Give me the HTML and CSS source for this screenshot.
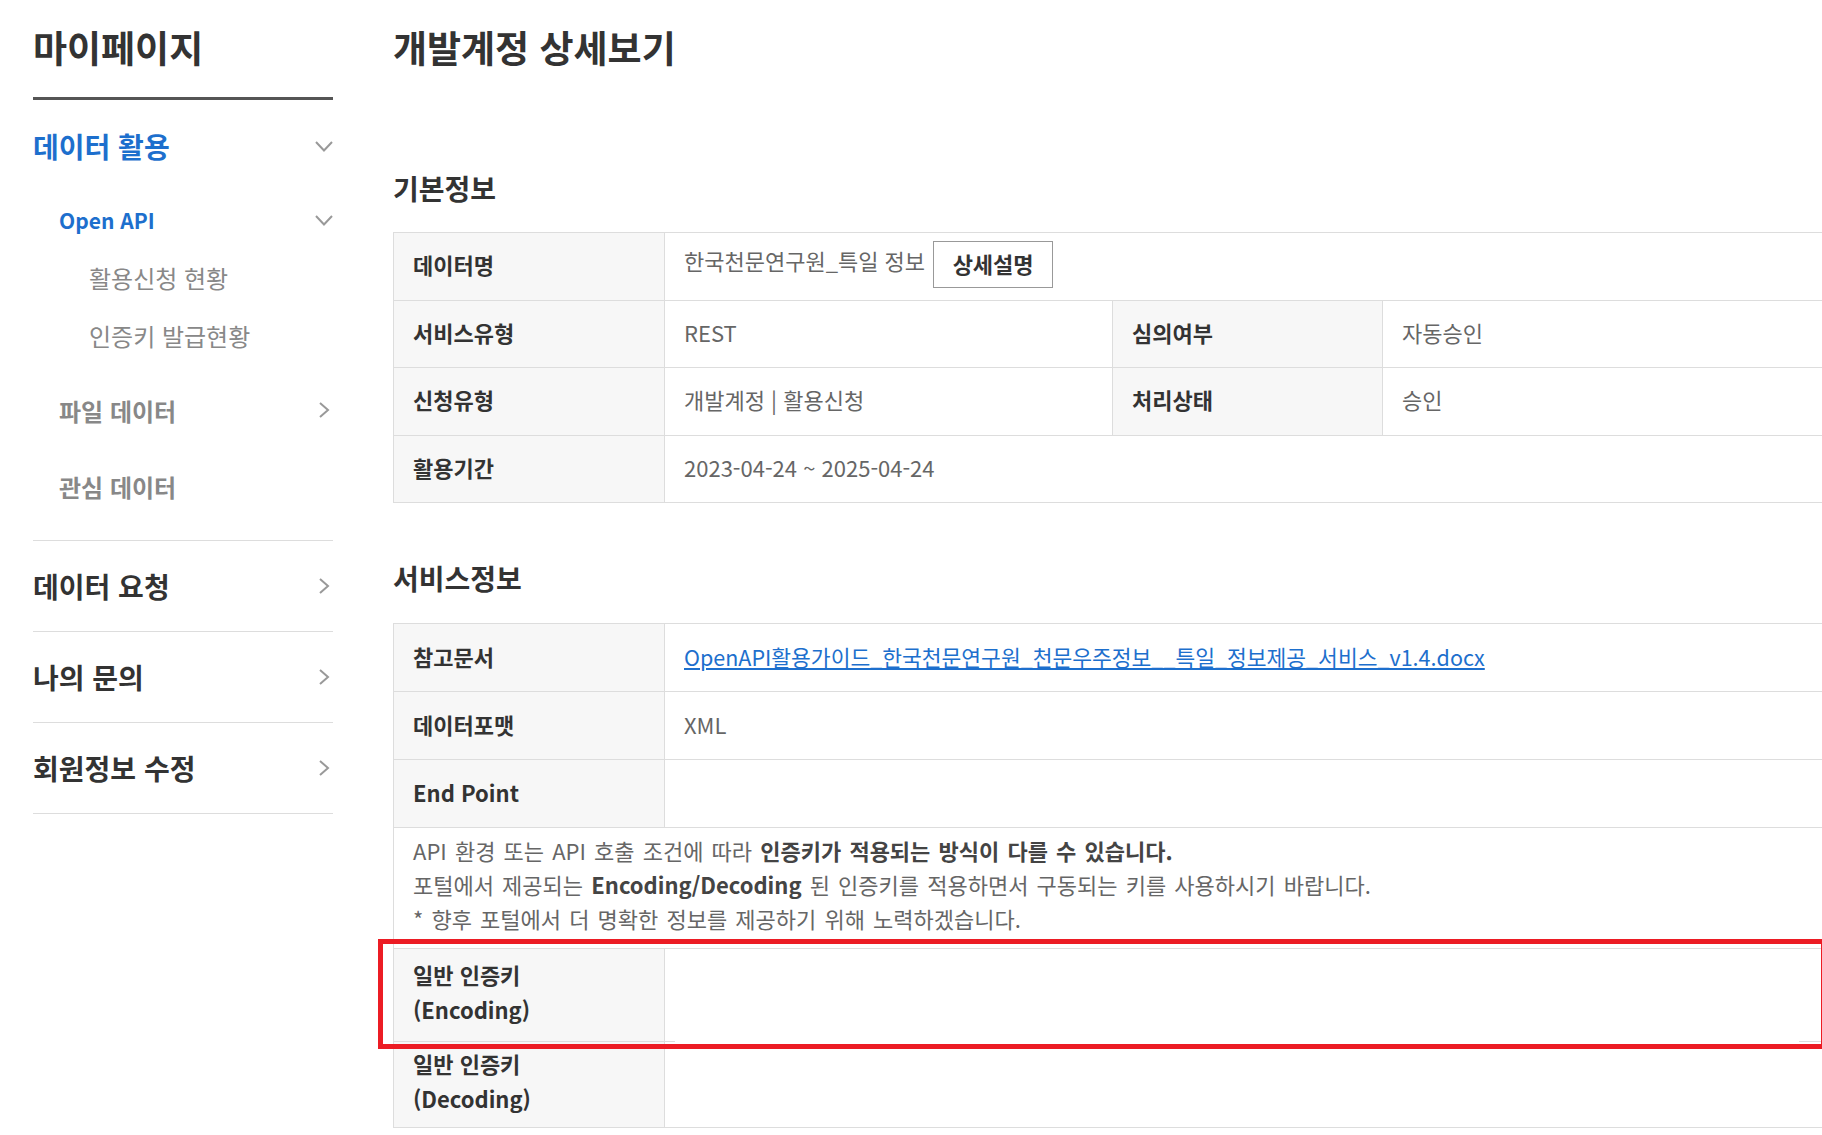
FILE: index.html
```html
<!DOCTYPE html>
<html lang="ko">
  <head>
    <meta charset="UTF-8" />
    <meta name="viewport" content="width=device-width, initial-scale=1.0" />
    <title>개발계정 상세보기</title>
    <link rel="stylesheet" href="styles.css">
  </head>
  <body>
    <div class="page">
      <!-- left menu -->
      <aside class="side">
        <h1 class="side-title">마이페이지</h1>

        <div class="side-group">
          <a class="side-head active" href="#">
            데이터 활용
            <svg class="chev-down" width="18" height="11" viewBox="0 0 18 11"><polyline points="1,1 9,9.5 17,1" /></svg>
          </a>
          <a class="side-sub active" href="#">
            Open API
            <svg class="chev-down" width="18" height="11" viewBox="0 0 18 11"><polyline points="1,1 9,9.5 17,1" /></svg>
          </a>
          <ul class="side-links">
            <li><a href="#">활용신청 현황</a></li>
            <li><a href="#">인증키 발급현황</a></li>
          </ul>
          <a class="side-sub" href="#">
            파일 데이터
            <svg class="chev-right" width="12" height="16" viewBox="0 0 12 16"><polyline points="2,1 10,8 2,15" /></svg>
          </a>
          <a class="side-sub" href="#">관심 데이터</a>
        </div>

        <a class="side-menu" href="#">
          데이터 요청
          <svg class="chev-right" width="12" height="16" viewBox="0 0 12 16"><polyline points="2,1 10,8 2,15" /></svg>
        </a>
        <a class="side-menu" href="#">
          나의 문의
          <svg class="chev-right" width="12" height="16" viewBox="0 0 12 16"><polyline points="2,1 10,8 2,15" /></svg>
        </a>
        <a class="side-menu" href="#">
          회원정보 수정
          <svg class="chev-right" width="12" height="16" viewBox="0 0 12 16"><polyline points="2,1 10,8 2,15" /></svg>
        </a>
      </aside>

      <!-- detail -->
      <main class="content">
        <h2 class="page-title">개발계정 상세보기</h2>

        <h3 class="section-title first">기본정보</h3>
        <table class="info basic">
          <colgroup>
            <col class="c-head" /><col class="c-val" /><col class="c-head2" /><col class="c-val" />
          </colgroup>
          <tr>
            <th>데이터명</th>
            <td colspan="3">한국천문연구원_특일 정보<button class="btn-detail" type="button">상세설명</button></td>
          </tr>
          <tr>
            <th>서비스유형</th>
            <td>REST</td>
            <th>심의여부</th>
            <td>자동승인</td>
          </tr>
          <tr>
            <th>신청유형</th>
            <td>개발계정 | 활용신청</td>
            <th>처리상태</th>
            <td>승인</td>
          </tr>
          <tr>
            <th>활용기간</th>
            <td colspan="3">2023-04-24 ~ 2025-04-24</td>
          </tr>
        </table>

        <h3 class="section-title">서비스정보</h3>
        <div class="service-wrap">
          <table class="info service">
            <colgroup>
              <col class="c-head" /><col class="c-val" /><col class="c-head2" /><col class="c-val" />
            </colgroup>
            <tr>
              <th>참고문서</th>
              <td colspan="3"><a class="doc-link" href="#">OpenAPI활용가이드_한국천문연구원_천문우주정보__특일_정보제공_서비스_v1.4.docx</a></td>
            </tr>
            <tr>
              <th>데이터포맷</th>
              <td colspan="3">XML</td>
            </tr>
            <tr>
              <th>End Point</th>
              <td colspan="3"></td>
            </tr>
            <tr class="note-row">
              <td colspan="4">
                API 환경 또는 API 호출 조건에 따라 <b>인증키가 적용되는 방식이 다를 수 있습니다.</b><br />
                포털에서 제공되는 <b>Encoding/Decoding</b> 된 인증키를 적용하면서 구동되는 키를 사용하시기 바랍니다.<br />
                * 향후 포털에서 더 명확한 정보를 제공하기 위해 노력하겠습니다.
              </td>
            </tr>
            <tr class="key-row enc">
              <th class="key-head">일반 인증키<br />(Encoding)</th>
              <td class="key-cell" colspan="3"></td>
            </tr>
            <tr class="key-row dec">
              <th>일반 인증키<br />(Decoding)</th>
              <td colspan="3"></td>
            </tr>
          </table>
          <div class="highlight"></div>
        </div>
      </main>
    </div>
  </body>
</html>
```

FILE: styles.css
```css
html,
body {
  margin: 0;
  overflow: hidden;
  background: #fff;
}

body {
  font-family: "Noto Sans CJK KR", "Noto Sans", sans-serif;
  color: #333;
}

a {
  text-decoration: none;
  color: inherit;
}

.page {
  display: flex;
  gap: 60px;
  padding-left: 33px;
}

/* sidebar */
.side {
  flex: 0 0 300px;
  width: 300px;
}

.side-title {
  margin: 24px 0 0;
  padding-bottom: 27px;
  font-size: 37px;
  line-height: 46px;
  font-weight: 700;
  color: #333;
  border-bottom: 3px solid #555;
}

.side-group {
  padding-bottom: 16px;
  border-bottom: 1px solid #ddd;
}

.side-head,
.side-menu {
  display: flex;
  align-items: center;
  justify-content: space-between;
  height: 92px;
  font-size: 28px;
  font-weight: 700;
  color: #333;
  box-sizing: border-box;
}

.side-head.active {
  color: #1d6fcd;
}

.side-sub {
  display: flex;
  align-items: center;
  justify-content: space-between;
  height: 76px;
  padding-left: 26px;
  font-size: 24px;
  font-weight: 700;
  color: #888;
}

.side-sub.active {
  height: 56px;
  font-size: 21px;
  color: #1d6fcd;
}

.side-links {
  list-style: none;
  margin: 0 0 8px;
  padding: 0 0 0 56px;
}

.side-links li {
  display: flex;
  align-items: center;
  height: 58px;
  font-size: 24px;
  color: #888;
}

.side-menu {
  height: 91px;
  border-bottom: 1px solid #ddd;
}

.chev-down polyline,
.chev-right polyline {
  fill: none;
  stroke: #999;
  stroke-width: 2;
}

.chev-right {
  margin-right: 3px;
}

/* content */
.content {
  flex: 1;
  min-width: 0;
}

.page-title {
  margin: 24px 0 0;
  font-size: 37px;
  line-height: 46px;
  font-weight: 700;
  color: #333;
}

.section-title {
  margin: 57px 0 27px;
  font-size: 28px;
  line-height: 36px;
  font-weight: 700;
  color: #333;
}

.section-title.first {
  margin-top: 100px;
  margin-bottom: 26px;
}

.info {
  width: 1438px;
  table-layout: fixed;
  border-collapse: separate;
  border-spacing: 0;
  border-top: 1px solid #ddd;
  border-left: 1px solid #ddd;
  font-size: 22px;
}

.c-head { width: 271px; }
.c-val { width: 448px; }
.c-head2 { width: 270px; }

.info th,
.info td {
  padding: 0 19px 4px;
  border-right: 1px solid #ddd;
  border-bottom: 1px solid #ddd;
  text-align: left;
  vertical-align: middle;
  box-sizing: border-box;
}

.info th {
  background: #f7f7f7;
  font-weight: 700;
  color: #333;
}

.info td {
  color: #666;
}

.basic tr {
  height: 67.5px;
}

.service tr {
  height: 68px;
}

.btn-detail {
  width: 120px;
  height: 47px;
  margin-left: 8px;
  padding: 0 0 2px;
  border: 1px solid #999;
  background: #fff;
  font-family: inherit;
  font-size: 22px;
  font-weight: 700;
  color: #333;
  vertical-align: middle;
}

.doc-link {
  font-size: 21.5px;
  color: #1d6fcd;
  text-decoration: underline;
}

.service .note-row {
  height: 119px;
}

.info .note-row td {
  padding: 5px 19px 13px;
  font-size: 22px;
  line-height: 34px;
  word-spacing: 2px;
  color: #666;
}

.note-row b {
  color: #444;
}

.info .key-row th {
  padding-bottom: 7px;
  line-height: 35px;
}

.service .key-row.enc {
  height: 93px;
}

.service .key-row.dec {
  height: 86px;
}

.key-head {
  position: relative;
}

.key-head::after {
  content: "";
  position: absolute;
  right: -11px;
  bottom: -1px;
  width: 11px;
  height: 1px;
  background: #ddd;
}

.info .key-cell {
  position: relative;
  border-bottom: none;
}

.key-cell::after {
  content: "";
  position: absolute;
  right: 0;
  bottom: 0;
  width: 31px;
  height: 1px;
  background: #ddd;
}

/* annotation box over the encoding row */
.service-wrap {
  position: relative;
}

.highlight {
  position: absolute;
  top: 316px;
  left: -15px;
  width: 1448px;
  height: 110px;
  box-sizing: border-box;
  border: 5px solid #ec1c24;
  pointer-events: none;
}
```
